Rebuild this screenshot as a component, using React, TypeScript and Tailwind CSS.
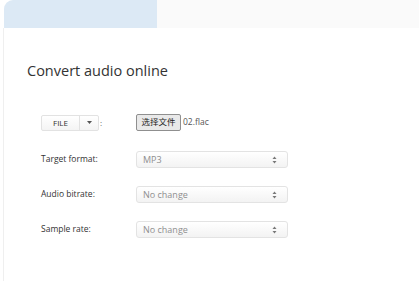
import React from "react";

function Arrows() {
  return (
    <svg width="5" height="8" viewBox="0 0 5 8" className="shrink-0">
      <path d="M2.5 0.5 L4.5 3 L0.5 3 Z" fill="#777" />
      <path d="M2.5 7.5 L4.5 5 L0.5 5 Z" fill="#777" />
    </svg>
  );
}

function Select({ value }: { value: string }) {
  return (
    <div className="flex h-[17px] w-[152px] items-center justify-between rounded-[3px] border border-[#e3e3e3] bg-gradient-to-b from-[#ffffff] to-[#f3f3f3] pl-[6px] pr-[10px] text-[9px] text-[#8f8f8f]">
      <span>{value}</span>
      <Arrows />
    </div>
  );
}

function Row({ label, value }: { label: string; value: string }) {
  return (
    <div className="flex h-[17px] items-center">
      <div className="w-[95px] text-[8.5px] text-[#333]">{label}</div>
      <Select value={value} />
    </div>
  );
}

export default function App() {
  return (
    <div
      className="relative h-[281px] w-[419px] overflow-hidden bg-white"
      style={{ fontFamily: '"Open Sans", "Noto Sans CJK SC", sans-serif' }}
    >
      <div className="flex h-[28px]">
        <div className="ml-[4px] h-[28px] w-[153px] rounded-tl-[9px] bg-[#dce9f5]" />
        <div className="h-[28px] flex-1 bg-[#fafafa]" />
      </div>
      <div className="ml-[3px] h-[253px] border-l border-[#efefef] pl-[23px]">
        <h1 className="pt-[33px] text-[14.5px] leading-[20px] text-[#333]">Convert audio online</h1>
        <div className="ml-[14px] mt-[33px] flex flex-col">
          <div className="flex h-[17px] items-center">
            <div className="flex w-[95px] items-center">
              <div className="flex h-[16px] items-center rounded-[2px] border border-[#e2e2e2] bg-gradient-to-b from-[#ffffff] to-[#f4f4f4] text-[8px] text-[#333]">
                <div className="flex h-full w-[38px] items-center justify-center border-r border-[#e2e2e2]">FILE</div>
                <div className="flex h-full w-[18px] items-center justify-center">
                  <svg width="5" height="3" viewBox="0 0 5 3">
                    <path d="M0 0 L5 0 L2.5 3 Z" fill="#555" />
                  </svg>
                </div>
              </div>
              <span className="ml-[1px] text-[8px] text-[#666]">:</span>
            </div>
            <div className="flex items-center">
              <div className="flex h-[17px] w-[45px] items-center justify-center rounded-[2px] border border-[#8f8f8f] bg-[#e9e9e9] text-[8.5px] text-[#222]">
                选择文件
              </div>
              <span className="ml-[2px] text-[8.5px] text-[#555]">02.flac</span>
            </div>
          </div>
          <div className="mt-[20px] flex flex-col gap-[18px]">
            <Row label="Target format:" value="MP3" />
            <Row label="Audio bitrate:" value="No change" />
            <Row label="Sample rate:" value="No change" />
          </div>
        </div>
      </div>
    </div>
  );
}
